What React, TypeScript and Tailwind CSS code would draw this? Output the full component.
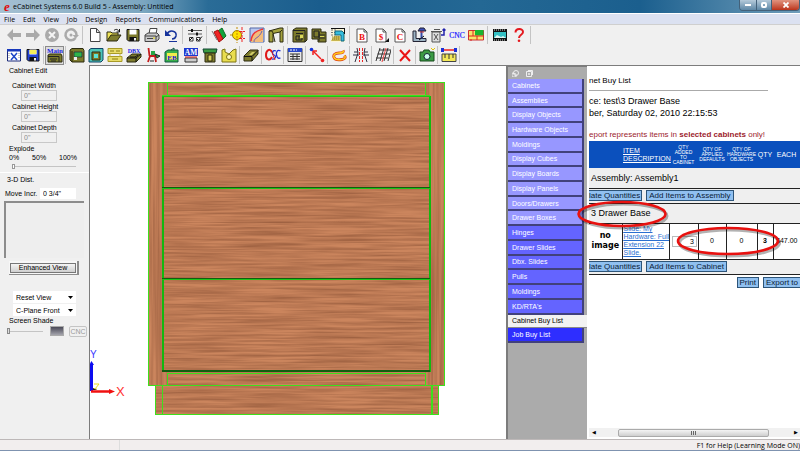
import type { ReactNode } from "react";
import { clsx } from "clsx";

const OLIVE = "#7d7b2c";
const DARK = "#2c2b10";

const Glyph = ({ children }: { children: ReactNode }) => (
  <svg viewBox="0 0 16 16" className="h-4 w-4 shrink-0" fill="none" aria-hidden="true">
    {children}
  </svg>
);

const Letter = ({ ch }: { ch: string }) => (
  <>
    <path d="M3 2h7l3 3v10H3z" fill="#fff" stroke="#555" />
    <path d="M10 2v3h3" stroke="#555" />
    <text x="8" y="12.5" textAnchor="middle" fontSize="9" fontWeight="bold" fontFamily="Liberation Serif, serif" fill="#e11">{ch}</text>
  </>
);

const Floppy = ({ fill }: { fill: string }) => (
  <>
    <path d="M2 2.500h12v11.500H3.500L2 12.500z" fill={fill} stroke="#111" />
    <path d="M4.500 2.500h7v5h-7z" fill="#fff" />
    <path d="M4.500 10h7v4h-7z" fill="#111" />
    <path d="M9 11h2v2.500H9z" fill="#eee" />
  </>
);

const glyphs: Record<string, ReactNode> = {
  back: <path d="M1 8l6-6v4h8v4H7v4z" fill="#aaa" />,
  forward: <path d="M15 8L9 2v4H1v4h8v4z" fill="#aaa" />,
  stop: (
    <>
      <circle cx="8" cy="8" r="7" fill="#aaa" />
      <path d="M5 5l6 6M11 5l-6 6" stroke="#f4f4f4" strokeWidth="2" />
    </>
  ),
  refresh: (
    <>
      <path d="M12.500 11A5.500 5.500 0 1 1 13.500 8" stroke="#aaa" strokeWidth="2.500" />
      <path d="M9.500 8H16l-3.200 3.500z" fill="#aaa" />
      <circle cx="8" cy="8" r="1.500" fill="#aaa" />
    </>
  ),
  new: <path d="M3.500 1.500h6l3.500 4v9H3.500zM9.500 1.500v4H13" fill="#fff" stroke="#444" />,
  open: (
    <>
      <path d="M1 14V5h4l1 1h6v3" fill="#efe45a" stroke={DARK} />
      <path d="M1 14l4-6h10l-4 6z" fill={OLIVE} stroke={DARK} />
      <path d="M8 3.500c2-2 4-1 5 1M13.500 2v3h-3" stroke="#111" />
    </>
  ),
  save: <Floppy fill={OLIVE} />,
  print: (
    <>
      <path d="M5 7l1-5.500h7L12 7" fill="#fff" stroke="#444" />
      <path d="M1 8l3-2h9l2 2v4l-3 2.500H1z" fill="#c9c9c9" stroke="#444" />
      <path d="M1 9h11v5M3 11.500h6M15 8l-3 2" stroke="#444" />
      <path d="M9 11h2" stroke="#e8d800" />
    </>
  ),
  undo: (
    <>
      <path d="M4 7c3-5 10-3 9 2-.5 2-2 3-4 3" stroke="#16339b" strokeWidth="1.500" />
      <path d="M2 3v6h6z" fill="#16339b" />
      <path d="M6 14.500h8" stroke="#16339b" />
    </>
  ),
  sliders: (
    <>
      <path d="M1 3.500h14M1 7h14" stroke="#555" />
      <path d="M5 2v3M10 5.500v3" stroke="#111" strokeWidth="2" />
      <path d="M2.500 10.500h3.500V14H2.500zM9.500 10.500H13V14H9.500z" fill="#fff" stroke="#333" />
      <path d="M10 12l1.500 1.500L15 9.500M3 13l3-3" stroke="#111" />
    </>
  ),
  books: (
    <>
      <path d="M7 4l4-3 4 8-4 4z" fill="#12a53c" stroke="#0b6b26" />
      <path d="M3 5l4-2 5 9-4 3z" fill="#ef2525" stroke="#a30d0d" />
      <path d="M1 4l5 9" stroke="#777" />
    </>
  ),
  target: (
    <>
      <circle cx="7" cy="8" r="4.500" fill="#ffe000" stroke="#97800a" />
      <path d="M7 0v16M0 8h3" stroke="#c28c00" strokeDasharray="2 1" />
      <path d="M12 0v16M9 4.500h6M9 11.500h6" stroke="#e22" strokeDasharray="3 1" />
    </>
  ),
  curve: (
    <>
      <path d="M1 1h14v14H1z" fill="#b8c8f0" stroke="#5468a8" />
      <path d="M2 15C3 8 6 4 14 2v13z" fill="#f3bd7c" />
      <path d="M2 14C3 5 8 4 14 2" stroke="#e33" strokeWidth="1.500" />
      <path d="M5 15c0-5 5-3 8-11" stroke="#6a5fae" />
    </>
  ),
  door: (
    <>
      <path d="M1 4l11-3h3v14h-3V5L5 6.500V15H1z" fill="#a5a33f" stroke={DARK} />
      <path d="M5 6.500L7 15M12 5l2-2M1 4h3l1 2" stroke={DARK} />
    </>
  ),
  cabA: (
    <>
      <path d="M1 3l3-2h11v12l-2 2H1z" fill={OLIVE} stroke={DARK} />
      <path d="M1 3.500h12V15M4 6.500h7M4 9h6v4H4zM7 9v4" stroke="#222" />
      <path d="M8 8h3v3H8z" fill="#d8d75a" />
    </>
  ),
  cabB: (
    <>
      <path d="M1 2h9v3h5v10H7v-3H1z" fill={OLIVE} stroke={DARK} />
      <path d="M3 4h5v6H3zM8 8h6M8 11h6M8 5v9" stroke="#222" />
      <path d="M9 9h4v1H9z" fill="#d8d75a" />
    </>
  ),
  faucet: (
    <>
      <path d="M1 1h14v14H1z" fill="#fbf6d6" />
      <path d="M1 3h5M1 5.500h5M1 8h4" stroke="#777" strokeDasharray="2 1" />
      <path d="M5 4h7l2 2v8h-3V8H5z" fill="#35bede" stroke="#15657a" />
      <path d="M1 14h9V9H4z" fill="#c8b64f" />
      <path d="M2 10h7M2 12h8" stroke="#8d7c28" strokeDasharray="1 1" />
      <path d="M1 1.500h14M14.500 1v6" stroke="#111" />
    </>
  ),
  pageB: <Letter ch="B" />,
  pageS: (
    <>
      <Letter ch="$" />
      <path d="M16 11v4h-4z" fill="#111" />
    </>
  ),
  pageC: <Letter ch="C" />,
  machine: (
    <>
      <path d="M2 4v10.500h13v-3H5V4z" fill="#9cb4c4" stroke="#223" />
      <path d="M10.500 4v8" stroke="#334ba8" strokeWidth="2" />
      <path d="M7 4l2-3h4l2 3z" fill="#3b4fb8" stroke="#223" />
      <path d="M9 5h4" stroke="#d43535" />
      <path d="M8 13l5-4" stroke="#111" />
    </>
  ),
  trash: (
    <>
      <path d="M2 5h8v10H2z" fill="#ddd" stroke="#555" />
      <path d="M1 4.500h11M4 2.500h6M4 7l4 6M8 7l-4 6" stroke="#555" />
      <path d="M11 8h3V2M12.500 3.500L14 2l1.500 1.500" stroke="#22a" strokeWidth="1.500" />
    </>
  ),
  cnc: <text x="8" y="11" textAnchor="middle" fontSize="7.500" fontFamily="Liberation Serif, serif" fill="#1a1aff" stroke="#1a1aff" strokeWidth=".2">CNC</text>,
  layout: (
    <>
      <path d="M.5 3.500h15V13H.5z" fill="#f5e36a" stroke="#c33" />
      <path d="M7 3h8.500v5.500H7z" fill="#19b52f" />
      <path d="M0 9h16M5 3v6M9 9v4M3 12v2" stroke="#d22" />
    </>
  ),
  film: (
    <>
      <path d="M1 2h14v12H1z" fill="#111" />
      <path d="M2 3h12M2 13h12" stroke="#ddd" strokeDasharray="1 1" />
      <path d="M2 5h12v6H2z" fill="#34c0c4" />
      <path d="M2 11l3-3 4 2 2-1 3 2z" fill="#dff7f4" />
    </>
  ),
  help: (
    <>
      <path d="M4.500 5.500C4.500 1 12 1 12 5c0 3-4 2.500-4 6" stroke="#e4181e" strokeWidth="2" />
      <circle cx="8" cy="13.800" r="1.300" fill="#e4181e" />
    </>
  ),
  xwin: (
    <>
      <path d="M1.500 2.500h13v11.500h-13z" fill="#fff" stroke="#1b2a7a" />
      <path d="M1 2h14v2.500H1z" fill="#1738bb" />
      <path d="M5 6l6 7M11 6l-6 7" stroke="#1b46c8" strokeWidth="1.500" />
      <path d="M3 6v6M13 6v6" stroke="#999" strokeDasharray="1 1" />
    </>
  ),
  saveBlue: (
    <>
      <Floppy fill="#2443d6" />
      <path d="M4.500 3h7v4h-7z" fill="#f6ee5a" />
    </>
  ),
  main: (
    <>
      <text x="8" y="5.500" textAnchor="middle" fontSize="7" fontWeight="bold" fontFamily="Liberation Serif, serif" fill="#1a1ae0">Main</text>
      <path d="M1 8l2-1h11l1 2v6H1z" fill={OLIVE} stroke={DARK} />
      <path d="M1 9.500h11V15M3 12h7M4 14h5" stroke="#222" />
    </>
  ),
  greenBox: (
    <>
      <path d="M1 3l2-1.500h11l1 2V15H3l-2-2z" fill={OLIVE} stroke={DARK} />
      <path d="M5 5h8v5H5z" fill="#2fb54a" stroke="#114" strokeWidth=".6" />
      <path d="M5 10h3v3H5z" fill="#eee" />
      <path d="M3 4v11" stroke={DARK} />
    </>
  ),
  tealBox: (
    <>
      <path d="M1 3l2-1.500h12V13l-2 2H1z" fill="#4cc5b8" stroke="#146" />
      <path d="M4 5h8v8H4z" fill={OLIVE} stroke={DARK} />
      <path d="M6 7h4v4H6z" fill="#5be2d7" />
    </>
  ),
  dresser: (
    <>
      <path d="M1 1.500h14v5H1zM1 9.500h14v5H1z" fill="#e8dd68" stroke="#a89a26" />
      <path d="M3 4h4M9 4h4M5 12h6" stroke="#8a7c12" />
      <path d="M3 6.500v3M13 6.500v3" stroke="#c8bb4a" />
    </>
  ),
  dbx: (
    <>
      <text x="8" y="5.500" textAnchor="middle" fontSize="6" fontWeight="bold" fontFamily="Liberation Serif, serif" fill="#1a1ae0">DBX</text>
      <path d="M1 11l5-4h9v3l-5 5H1z" fill={OLIVE} stroke={DARK} />
      <path d="M1 11h9l5-4M10 11v4M4 10h5l3-2" stroke="#111" />
    </>
  ),
  chair: (
    <>
      <path d="M3.500 1l1 8M4 9h7M5 9l-2 6M10 9l1 6" stroke="#c41c1c" strokeWidth="1.800" />
      <path d="M6 4h4v4H6z" fill="#27a746" />
      <path d="M10 7l5 2-3 2zM5 14h4" fill="#27a746" stroke="#222" />
    </>
  ),
  eb: (
    <>
      <path d="M1 5l3-2h10v12H1z" fill="#38b24a" stroke="#154" />
      <path d="M3 6h10v7H3z" fill="#f2ec4c" />
      <text x="8" y="12.500" textAnchor="middle" fontSize="7" fontWeight="bold" fontFamily="Liberation Serif, serif" fill="#1616d0">EB</text>
      <path d="M7 3l3-2v2" stroke="#154" />
    </>
  ),
  am: (
    <>
      <path d="M1 1h14v8H1z" fill="#1c38cf" />
      <text x="8" y="7.500" textAnchor="middle" fontSize="7.500" fontWeight="bold" fontFamily="Liberation Serif, serif" fill="#fff">AM</text>
      <path d="M2 11h12v4H2z" fill="#ccc" stroke="#333" />
      <path d="M2 10h12" stroke="#d22" />
    </>
  ),
  column: (
    <>
      <path d="M1 2h14l-1 4H2z" fill="#3a9b42" stroke="#143" />
      <path d="M3 6h10v9H3z" fill={OLIVE} stroke={DARK} />
      <path d="M6 8h4v6H6z" fill="#d9d35a" stroke={DARK} />
    </>
  ),
  yellowPart: (
    <>
      <path d="M1 3l3-1v3l4 2 4-4 3-1v13H1z" fill="#e9dd4f" stroke="#7d7314" />
      <circle cx="8" cy="10" r="2.500" fill="#fff9b5" stroke="#7d7314" />
    </>
  ),
  slab: (
    <>
      <path d="M1 9l6-6h8v4l-6 7H1z" fill={OLIVE} stroke={DARK} />
      <path d="M1 9.500h8l6-6M9 10v4" stroke="#111" />
      <path d="M6 8l3-3h3L9 8z" fill="#d0cc68" />
    </>
  ),
  csc: (
    <>
      <path d="M7 5C5 1 1 3 1 8s4 6 6 2" stroke="#e01818" strokeWidth="2" />
      <path d="M11 4C8 2 6 7 9 8s1 5-2 4" stroke="#1f2fd4" strokeWidth="1.300" />
      <path d="M15.500 4C12 2 11 6 11.500 8s1 4 4 3" stroke="#1f2fd4" strokeWidth="1.300" />
      <path d="M6 3l4 10" stroke="#e01818" />
    </>
  ),
  report: (
    <>
      <path d="M1 1.500h14v13H1z" fill="#e8e8e8" stroke="#333" />
      <path d="M1 1h14v4H1z" fill="#2847c9" />
      <path d="M3 3h7" stroke="#fff" strokeDasharray="2 1" />
      <path d="M3 7h10M3 9.500h10M3 12h10M6 7v6M10 7v6" stroke="#333" />
    </>
  ),
  measure: (
    <>
      <path d="M4 4l8 8" stroke="#e22" strokeWidth="1.500" />
      <path d="M4 8V4h4" stroke="#e22" strokeWidth="1.500" />
      <circle cx="2.500" cy="2.500" r="1.800" fill="#1635d8" />
      <circle cx="13.500" cy="13.500" r="1.800" fill="#e22" />
    </>
  ),
  loop: (
    <>
      <path d="M12 3.500c1 2-1 2.500-4 2.500-4 0-6 2-5 4.500C4 13 8 13 11 12.500s4-2 2.500-4" stroke="#de3b14" strokeWidth="2.800" />
      <path d="M12 3.500c1 2-1 2.500-4 2.500-4 0-6 2-5 4.500C4 13 8 13 11 12.500s4-2 2.500-4" stroke="#ffd21b" strokeWidth="1.500" />
    </>
  ),
  rails: (
    <>
      <path d="M4 1l1 5-3 9M12 1l-1 5 3 9M0 8h6M10 8h6M1 5h4M11 5h4" stroke="#334" />
      <path d="M6.500 1v14M9.500 1v14" stroke="#e22" strokeDasharray="3 1" />
    </>
  ),
  grid: (
    <>
      <path d="M4 3h12M2.500 7h12M1 11h12M5 1L1 14M9 1L5 14M13 1L9 14M16 3l-3 11" stroke="#333" />
      <path d="M11 1L7 15" stroke="#e44" />
    </>
  ),
  remove: <path d="M3 3l10 11M13 3L3 14" stroke="#ea1414" strokeWidth="2" />,
  camera: (
    <>
      <path d="M1 5h3l1-2h5l1 2h4v9H1z" fill="#3b9a44" stroke="#174a1d" />
      <circle cx="8" cy="9.500" r="3" fill="#cfe" stroke="#123" />
      <path d="M12 1l2 2 2-2" stroke="#e6c400" />
    </>
  ),
  dimension: (
    <>
      <path d="M2 3h12" stroke="#e22" strokeWidth="1.500" />
      <path d="M0 1h3v4H0zM13 1h3v4h-3z" fill="#1c2fd6" />
      <path d="M1 7h14v7.500H1z" fill="#f4e957" stroke="#444" />
      <path d="M4 7v4M8 7v5M12 7v4" stroke="#333" />
    </>
  ),
};

const fileTools = [
  ["back", "forward", "stop", "refresh"],
  ["new", "open", "save", "print", "undo"],
  ["sliders"],
  ["books", "target", "curve", "door"],
  ["cabA", "cabB", "faucet"],
  ["pageB", "pageS", "pageC", "machine", "trash", "cnc", "layout"],
  ["film", "help"],
];

const designTools = [
  ["xwin", "saveBlue"],
  ["main"],
  ["greenBox", "tealBox", "dresser", "dbx", "chair", "eb", "am", "column", "yellowPart"],
  ["slab"],
  ["csc"],
  ["report"],
  ["measure"],
  ["loop"],
  ["rails"],
  ["grid"],
  ["remove"],
  ["camera"],
  ["dimension"],
];

const Toolbar = ({ groups, wide }: { groups: string[][]; wide?: boolean }) => (
  <div className="flex h-5 items-center pl-1">
    {groups.map((group) => (
      <div key={group[0]} className="flex items-center">
        {group.map((name) => (
          <button
            key={name}
            type="button"
            aria-label={name}
            className={clsx(
              "flex h-[19px] w-[19px] items-center justify-center",
              name === "main" && "border border-[#8a8a8a] bg-[#dcdcdc]"
            )}
          >
            <Glyph>{glyphs[name]}</Glyph>
          </button>
        ))}
        <span className={clsx("flex h-[18px] justify-center", wide ? "w-[5px]" : "w-[3px]")}>
          <span className="w-px bg-[#c4c4c4]" />
        </span>
      </div>
    ))}
  </div>
);

const TitleBar = () => (
  <header className="flex h-[13px] items-center bg-[linear-gradient(90deg,#a5c0d2,#7ba6c0_18%,#2a6c97_26%,#1a5d8d_40%,#246894_60%,#1b5f8e_80%,#6f9dba)] pl-1">
    <span className="w-2 font-['Liberation_Serif',serif] text-[13px] leading-none font-bold text-[#e00b0b] italic">e</span>
    <h1 className="ml-px flex-1 font-['Open_Sans',sans-serif] text-[7px] leading-none text-black">
      eCabinet Systems 6.0 Build 5 - Assembly: Untitled
    </h1>
    <div className="flex h-[11px] self-start overflow-hidden rounded-b-sm border border-t-0 border-[#43617a]">
      <button type="button" aria-label="Minimize" className="flex w-4 items-center justify-center bg-linear-to-b from-[#b5cada] to-[#5e88a6]">
        <span className="h-[2px] w-[6px] bg-white" />
      </button>
      <button type="button" aria-label="Restore" className="flex w-4 items-center justify-center border-x border-[#43617a] bg-linear-to-b from-[#b5cada] to-[#5e88a6]">
        <span className="h-[6px] w-[6px] rounded-xs border-2 border-white" />
      </button>
      <button type="button" aria-label="Close" className="flex w-[27px] items-center justify-center bg-linear-to-b from-[#e0937f] to-[#bb3218]">
        <svg viewBox="0 0 6 6" className="h-[6px] w-[6px]">
          <path d="M0.500 0.500l5 5M5.500 0.500l-5 5" stroke="#fff" strokeWidth="1.800" />
        </svg>
      </button>
    </div>
  </header>
);

const MenuBar = () => (
  <nav className="flex h-3 items-center gap-2 border-y border-t-white border-b-[#cfcfcf] bg-[#dbe1f1] pl-1 font-['Open_Sans',sans-serif] text-[7px] leading-none text-black">
    {["File", "Edit", "View", "Job", "Design", "Reports", "Communications", "Help"].map((item) => (
      <button key={item} type="button">{item}</button>
    ))}
  </nav>
);

const SizeField = ({ id, label }: { id: string; label: string }) => (
  <div className="flex h-[21px] flex-col">
    <label htmlFor={id} className="ml-3 leading-[9px]">{label}</label>
    <input id={id} disabled defaultValue={'0"'} className="ml-[21px] h-[11px] w-9 border border-[#c8c8c8] px-[2px] text-[#8a8a8a]" />
  </div>
);

const CabinetEdit = () => (
  <aside className="flex w-[89px] shrink-0 flex-col bg-[#f0f0f0] text-[7px] leading-[9px] text-black">
    <h2 className="ml-[9px] pt-px">Cabinet Edit</h2>
    <div className="mt-[6px]">
      <SizeField id="cab-width" label="Cabinet Width" />
      <SizeField id="cab-height" label="Cabinet Height" />
      <SizeField id="cab-depth" label="Cabinet Depth" />
    </div>
    <label htmlFor="explode" className="ml-[9px]">Explode</label>
    <div className="ml-[9px] flex w-[68px] justify-between">
      <span>0%</span>
      <span>50%</span>
      <span>100%</span>
    </div>
    <input
      id="explode"
      type="range"
      defaultValue={0}
      className="ml-3 h-2 w-16 appearance-none bg-[linear-gradient(#c4c4c4,#c4c4c4)] bg-size-[100%_1px] bg-center bg-no-repeat [&::-webkit-slider-thumb]:h-[5px] [&::-webkit-slider-thumb]:w-[3px] [&::-webkit-slider-thumb]:appearance-none [&::-webkit-slider-thumb]:border [&::-webkit-slider-thumb]:border-[#999] [&::-webkit-slider-thumb]:bg-white"
    />
    <div className="mt-[2px] border-t border-white pt-[2px]">
      <span className="ml-[7px]">3-D Dist.</span>
    </div>
    <div className="mt-[3px] flex h-[13px] items-center">
      <label htmlFor="move-incr" className="ml-[5px] w-[35px]">Move Incr.</label>
      <input id="move-incr" defaultValue={'0 3/4"'} className="h-[11px] w-9 bg-white px-[3px]" />
    </div>
    <div className="mt-px mr-[5px] ml-1 h-[57px] border-t-2 border-l-2 border-[#8c8c8c] bg-[#eee]" />
    <button type="button" className="mt-[3px] ml-[9px] h-[14px] w-[70px] border-r-2 border-b border-[#8d8d8d] bg-[#f7f7f7] p-px">
      <span className="flex h-[10px] items-center justify-center border border-[#777] bg-linear-to-b from-[#f5f5f5] to-[#cfcfcf]">Enhanced View</span>
    </button>
    <div className="mt-4 ml-[13px] flex w-[63px] flex-col gap-px">
      {["Reset View", "C-Plane Front"].map((name) => (
        <div key={name} className="relative h-[12px]">
          <select aria-label={name} className="h-[12px] w-full appearance-none bg-white px-[3px]">
            <option>{name}</option>
          </select>
          <svg viewBox="0 0 5 3" className="pointer-events-none absolute top-[5px] right-[3px] h-[3px] w-[5px]">
            <path d="M0 0h5L2.500 3z" fill="#000" />
          </svg>
        </div>
      ))}
    </div>
    <label htmlFor="shade" className="ml-[9px]">Screen Shade</label>
    <div className="flex h-[12px] items-center">
      <input
        id="shade"
        type="range"
        defaultValue={0}
        className="ml-[7px] h-2 w-9 appearance-none bg-[linear-gradient(#c4c4c4,#c4c4c4)] bg-size-[100%_1px] bg-center bg-no-repeat [&::-webkit-slider-thumb]:h-[6px] [&::-webkit-slider-thumb]:w-[3px] [&::-webkit-slider-thumb]:appearance-none [&::-webkit-slider-thumb]:border [&::-webkit-slider-thumb]:border-[#888] [&::-webkit-slider-thumb]:bg-[#ddd]"
      />
      <span className="ml-[7px] h-[10px] w-[14px] border border-[#aaa] bg-linear-to-b from-[#4b4a58] to-[#a5a5ad]" />
      <button type="button" disabled className="ml-[5px] flex h-[11px] w-[18px] items-center justify-center rounded-xs border border-[#c4c4c4] text-[#9a9a9a]">CNC</button>
    </div>
  </aside>
);

const drawers = [31, 123, 214];

const CabinetView = () => (
  <main className="min-w-0 flex-1 border-t border-l border-[#7c7c7c] bg-white">
    <svg viewBox="0 0 416 373" className="h-full w-full" preserveAspectRatio="xMinYMin meet" role="img" aria-label="3 Drawer Base">
      <defs>
        <filter id="grainH" x="0" y="0" width="100%" height="100%" colorInterpolationFilters="sRGB">
          <feTurbulence type="fractalNoise" baseFrequency="0.014 0.45" numOctaves="3" seed="4" />
          <feColorMatrix values="0 0 0 0 .48  0 0 0 0 .27  0 0 0 0 .17  .9 0 0 0 -.25" />
        </filter>
        <filter id="grainV" x="0" y="0" width="100%" height="100%" colorInterpolationFilters="sRGB">
          <feTurbulence type="fractalNoise" baseFrequency="0.3 0.006" numOctaves="3" seed="9" />
          <feColorMatrix values="0 0 0 0 .48  0 0 0 0 .27  0 0 0 0 .17  .9 0 0 0 -.25" />
        </filter>
      </defs>
      <path d="M58 16h296v304h-6v29H65v-29h-7z" fill="#cb855d" />
      <rect x="58" y="16" width="19" height="304" filter="url(#grainV)" />
      <rect x="335" y="16" width="19" height="304" filter="url(#grainV)" />
      <rect x="77" y="16" width="258" height="304" filter="url(#grainH)" />
      <rect x="65" y="320" width="283" height="29" filter="url(#grainH)" />
      {drawers.map((y) => (
        <g key={y}>
          <rect x="73" y={y} width="267" height="91" fill="#cb855d" />
          <rect x="73" y={y} width="267" height="91" filter="url(#grainH)" />
        </g>
      ))}
      <g fill="none" stroke="#3de01c" shapeRendering="crispEdges">
        <path d="M58.500 16.500h296v303h-296z" />
        <path d="M65.500 320v28.500h283V320M72.500 320v29" />
        <path d="M342 320v29" strokeWidth="2" />
        <path d="M77.500 17v13M335.500 17v13M77.500 307v12M335.500 307v12M77 307.500h258M72 29.500h268" />
      </g>
      <rect x="58" y="319" width="297" height="1" fill="#3de01c" />
      <g fill="none" shapeRendering="crispEdges">
        <path d="M73 30v276M340 30v276" stroke="#12b80f" strokeWidth="2" />
        <path d="M72 30.500h268M72 122.500h268M72 213.500h268" stroke="#1fc416" />
        <path d="M72 121.500h268M72 212.500h268" stroke="#135c10" />
        <path d="M72 305h268" stroke="#135c10" strokeWidth="2" />
      </g>
      <g>
        <path d="M1.500 325v-26" stroke="#0c0cf0" strokeWidth="3" />
        <path d="M-1 299l2.500-4 2.500 4z" fill="#0c0cf0" />
        <path d="M1 325.500h20" stroke="#f01010" strokeWidth="2.500" />
        <path d="M19 323l6 2.500-6 2.500z" fill="#f01010" />
        <path d="M4 318h5l-4 5M3 323h4" stroke="#e8dc20" fill="none" />
        <path d="M3 322l4 2H3z" fill="#222" />
        <text x="26" y="330" fontSize="13" fontFamily="Liberation Sans, sans-serif" fill="#ff3030">X</text>
        <text x="0" y="300" fontSize="10" fontFamily="Liberation Sans, sans-serif" fill="#3838ff" dy="-8">Y</text>
      </g>
    </svg>
  </main>
);

const catalog = [
  "Cabinets", "Assemblies", "Display Objects", "Hardware Objects", "Moldings", "Display Cubes",
  "Display Boards", "Display Panels", "Doors/Drawers", "Drawer Boxes",
];
const parts = ["Hinges", "Drawer Slides", "Dbx. Slides", "Pulls", "Moldings", "KD/RTA's"];

const tabBase = "flex min-h-0 flex-1 items-center border-r-2 border-b-2 border-[#41417c] pl-1 text-left";

const CatalogTabs = () => (
  <nav className="w-[81px] shrink-0 border-t-2 border-l-2 border-[#7c7c7c] bg-[#ababab] text-[7px] leading-none text-white">
    <div className="flex h-3 items-center gap-[7px] pl-1">
      <svg viewBox="0 0 7 7" className="h-[7px] w-[7px]" fill="none" stroke="#eee">
        <circle cx="4" cy="3" r="2.500" />
        <path d="M0 3v4h4V4z" />
      </svg>
      <svg viewBox="0 0 7 7" className="h-[7px] w-[7px]" fill="none" stroke="#eee">
        <path d="M0.500 1.500h5v5h-5zM2 0.500h4.500V5M2 4h2M3 3v2" />
      </svg>
    </div>
    <div className="flex h-[264px] flex-col">
      {catalog.map((name) => (
        <button key={name} type="button" className={clsx(tabBase, "mr-[3px] bg-[#9797ff]")}>{name}</button>
      ))}
      {parts.map((name) => (
        <button key={name} type="button" className={clsx(tabBase, "mr-[3px] bg-[#6464ff]")}>{name}</button>
      ))}
      <button type="button" className="flex min-h-0 flex-1 items-center border-b border-[#888] bg-[#f2f2f2] pl-1 text-black">Cabinet Buy List</button>
      <button type="button" className={clsx(tabBase, "mr-[3px] bg-[#2e2eff]")}>Job Buy List</button>
    </div>
  </nav>
);

const BlueButton = ({ children, className }: { children: ReactNode; className?: string }) => (
  <button type="button" className={clsx("h-[11px] shrink-0 border border-[#2d5478] bg-[#90c0f0] text-[8px] leading-[9px] whitespace-nowrap text-[#0b1c38]", className)}>
    {children}
  </button>
);

const ActionRow = ({ label }: { label: string }) => (
  <tr className="h-[15px]">
    <td colSpan={7} className="border-y border-[#222] bg-[#efefef] p-0">
      <div className="flex items-center gap-1">
        <BlueButton className="border-l-0 pr-px">late Quantities</BlueButton>
        <BlueButton className="px-[2px]">{label}</BlueButton>
      </div>
    </td>
  </tr>
);

const BuyList = () => (
  <section className="relative flex w-[213px] shrink-0 flex-col border-t border-[#7c7c7c] bg-white pl-[2px] text-black">
    <h2 className="mt-[9px] h-[15px] text-[8px] leading-[12px] whitespace-nowrap">net Buy List</h2>
    <hr className="mr-8 border-[#aaa]" />
    <p className="mt-1 text-[9px] leading-[12px] whitespace-nowrap">
      ce: test\3 Drawer Base
      <br />
      ber, Saturday 02, 2010 22:15:53
    </p>
    <p className="mt-[11px] h-[11px] text-[8px] leading-[10px] whitespace-nowrap text-[#9c1c2c]">
      eport represents items in <b>selected cabinets</b> only!
    </p>
    <table className="w-full table-fixed border-collapse">
      <colgroup>
        <col className="w-[33px]" />
        <col className="w-[47px]" />
        <col className="w-[29px]" />
        <col className="w-[28px]" />
        <col className="w-[31px]" />
        <col className="w-4" />
        <col />
      </colgroup>
      <thead>
        <tr className="h-[27px] bg-[#0b50bd] text-[5px] leading-[5px] text-white [&>th]:p-0 [&>th]:font-normal">
          <th />
          <th className="text-left text-[7px] leading-[8px]">
            <a href="#item" className="ml-px block underline">ITEM DESCRIPTION</a>
          </th>
          <th>QTY<br />ADDED<br />TO<br />CABINET</th>
          <th>QTY OF<br />APPLIED<br />DEFAULTS</th>
          <th>QTY OF<br />HARDWARE<br />OBJECTS</th>
          <th className="text-[7px]">QTY</th>
          <th className="text-[7px]">EACH</th>
        </tr>
      </thead>
      <tbody>
        <tr className="h-[20px] bg-[#efefef]">
          <td colSpan={7} className="p-0 pl-[2px] text-[9px] leading-[12px]">Assembly: Assembly1</td>
        </tr>
        <ActionRow label="Add Items to Assembly" />
        <tr className="h-[20px] bg-[#efefef]">
          <td colSpan={7} className="p-0 pl-[2px] text-[9px] leading-[12px]">3 Drawer Base</td>
        </tr>
        <tr className="h-[36px] text-center text-[7px] leading-[8px] [&>td]:border [&>td]:border-[#222] [&>td]:p-0">
          <td className="border-l-0! font-['DejaVu_Sans',sans-serif] text-[8px] leading-[10px] font-bold">no<br />image</td>
          <td className="text-left text-[#2a6fd0] underline">
            <a href="#slide" className="ml-px block whitespace-nowrap">
              Slide: My<br />Hardware: Full<br />Extension 22<br />Slide.
            </a>
          </td>
          <td>
            <input aria-label="Quantity added" defaultValue="3" className="ml-[2px] h-[11px] w-[25px] border border-[#bbb] pr-[2px] text-right" />
          </td>
          <td>0</td>
          <td>0</td>
          <td className="font-bold">3</td>
          <td className="border-r-0! whitespace-nowrap">$47.00</td>
        </tr>
        <ActionRow label="Add Items to Cabinet" />
      </tbody>
    </table>
    <div className="mt-[2px] flex justify-end gap-1">
      <BlueButton className="px-[2px]">Print</BlueButton>
      <BlueButton className="border-r-0 px-[2px]">Export to</BlueButton>
    </div>
    <div className="mt-auto mb-[2px] flex h-[9px] items-center bg-[#f1f1f1] text-[5px]">
      <button type="button" aria-label="Scroll left" className="w-[9px]">◀</button>
      <div className="ml-5 flex h-2 w-[151px] items-center justify-center gap-px rounded-xs border border-[#aaa] bg-linear-to-b from-[#f4f4f4] to-[#cfcfcf]">
        <span className="h-1 w-px bg-[#666]" />
        <span className="h-1 w-px bg-[#666]" />
        <span className="h-1 w-px bg-[#666]" />
      </div>
      <button type="button" aria-label="Scroll right" className="ml-auto w-[9px]">▶</button>
    </div>
    <svg viewBox="0 0 206 62" className="pointer-events-none absolute top-[133px] -left-3 h-[62px] w-[206px]" fill="none">
      <g stroke="#000" strokeOpacity=".3" strokeWidth="3">
        <ellipse cx="48.500" cy="17" rx="43.500" ry="12" />
        <ellipse cx="154.500" cy="44" rx="50" ry="13" />
      </g>
      <g stroke="#e8110f" strokeWidth="2.600">
        <ellipse cx="47" cy="15" rx="43.500" ry="12" />
        <ellipse cx="153" cy="42" rx="50" ry="13" />
      </g>
    </svg>
  </section>
);

export default function App() {
  return (
    <div className="flex min-h-screen flex-col bg-[#f0f0f0] font-['Liberation_Sans',Arial,sans-serif]">
      <TitleBar />
      <MenuBar />
      <Toolbar groups={fileTools} wide />
      <Toolbar groups={designTools} />
      <div className="flex flex-1">
        <CabinetEdit />
        <CabinetView />
        <CatalogTabs />
        <BuyList />
      </div>
      <footer className="flex h-3 items-center border-t border-b border-t-[#bdb8b8] border-b-[#7f93b0] bg-[#f2eeee] font-['Open_Sans',sans-serif] text-[7px] leading-none text-black">
        <span className="h-full w-[120px] border-r border-[#ddd]" />
        <span className="ml-auto">F1 for Help (Learning Mode ON)</span>
      </footer>
    </div>
  );
}
